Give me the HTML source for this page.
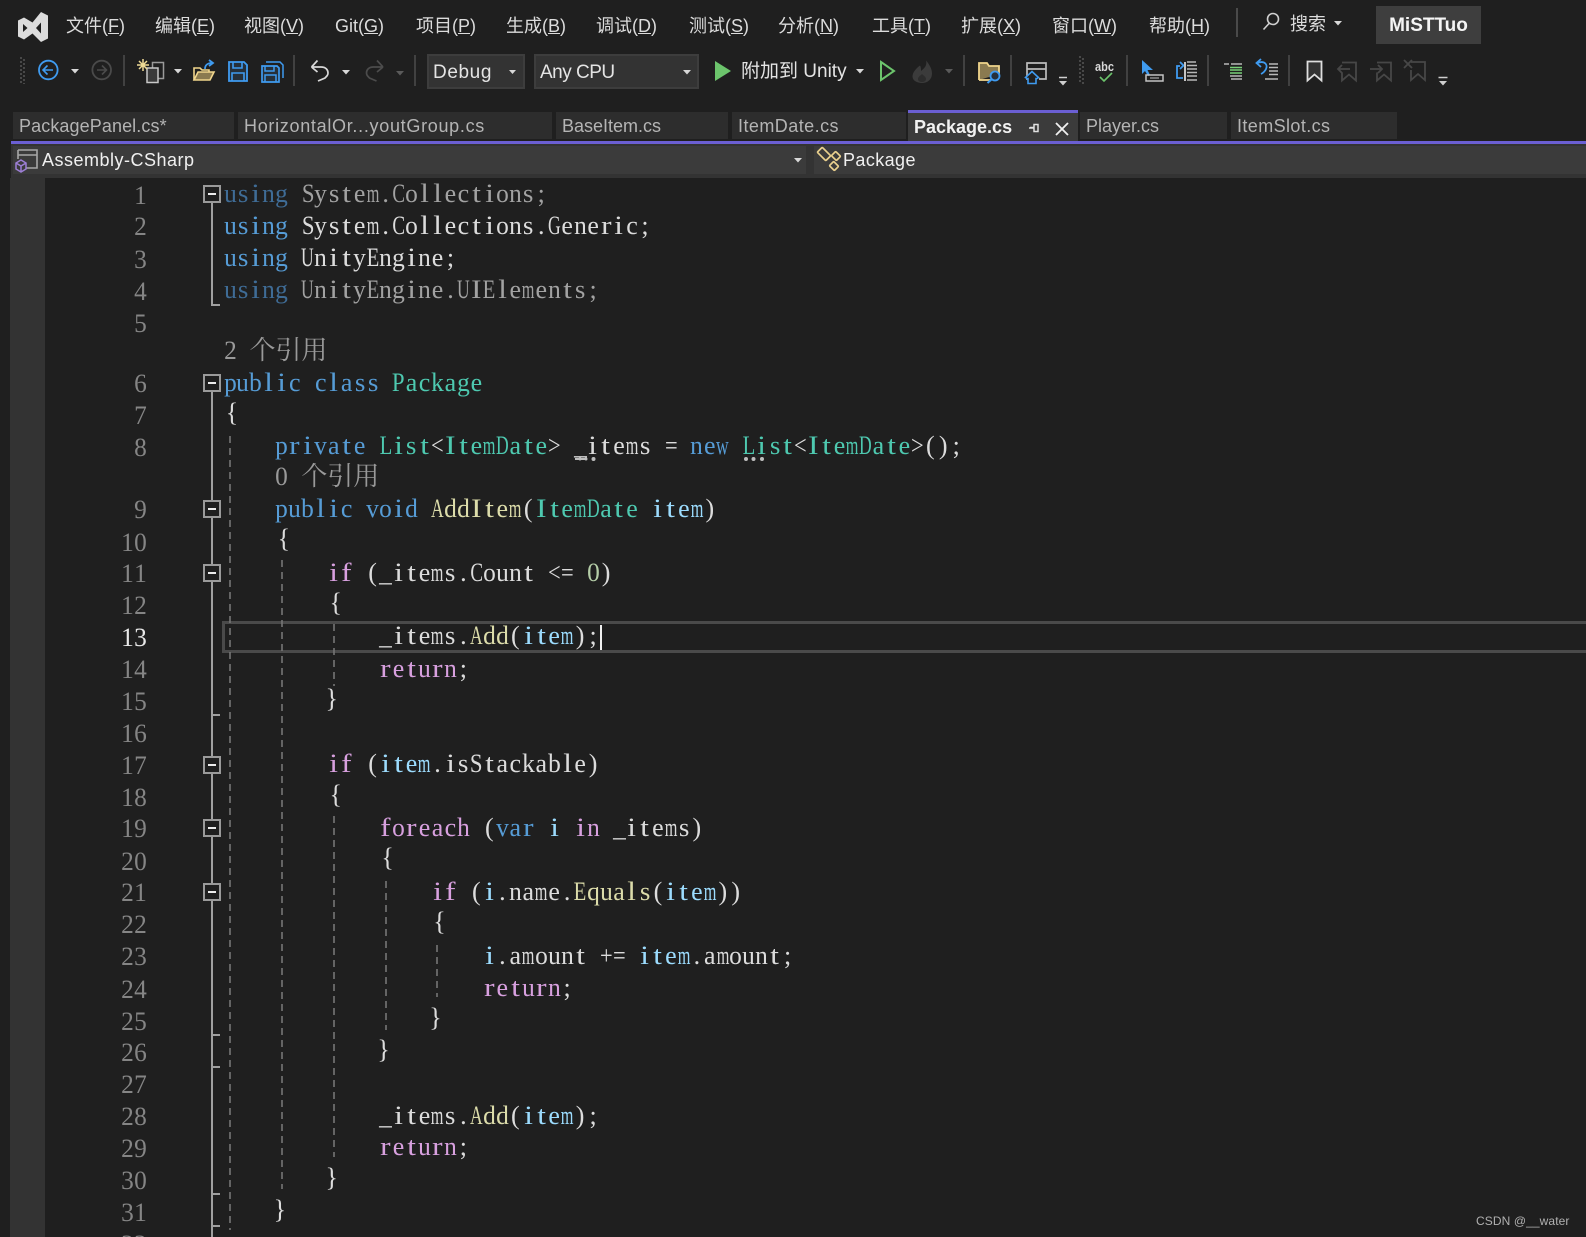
<!DOCTYPE html>
<html lang="zh"><head><meta charset="utf-8"><title>Package.cs</title>
<style>
html,body{margin:0;padding:0;background:#1f1f1f;width:1586px;height:1237px;overflow:hidden}
#r{position:relative;width:1586px;height:1237px;overflow:hidden;background:#1f1f1f;font-family:"Liberation Sans","Noto Sans CJK SC",sans-serif}
.b{position:absolute}
.t{position:absolute;white-space:nowrap;line-height:24px;height:24px}
.m{font-size:18px;color:#dcdcdc;top:14px}
.m u{text-underline-offset:1px}
.tab{font-size:18px;color:#b4b4b4;top:114px}
.tb{font-size:19px;color:#e4e4e4;top:60px}
.c,.n{position:absolute;white-space:pre;height:30px;line-height:30px;font-family:"Liberation Serif","Noto Serif CJK SC",serif;font-size:26px;color:#dcdcdc}
.c{left:223.5px}
.c.o{left:225.5px}
.c.e{left:221.5px}
.n{color:#858585;right:1439px}
.c b,.c em{font-weight:normal;font-style:normal}
.k{color:#569cd6}.kd{color:#3f6c96}.dd{color:#a2a2a2}
.f{color:#d8a0df}.y{color:#4ec9b0}.g{color:#dcdcaa}.p{color:#9cdcfe}.u{color:#b5cea8}.l{color:#a0a0a0}
.ch{display:inline-block;text-align:center;height:30px;vertical-align:top;overflow:visible;white-space:pre}
.ch i{font-style:normal;display:inline-block;transform-origin:50% 50%}
svg{position:absolute;left:0;top:0}
</style></head><body><div id="r">

<!-- backgrounds -->
<div class="b" style="left:10px;top:178px;width:35px;height:1059px;background:#333"></div>
<div class="b" style="left:13px;top:112px;width:221px;height:27px;background:#2d2d2d"></div>
<div class="b" style="left:238px;top:112px;width:314px;height:27px;background:#2d2d2d"></div>
<div class="b" style="left:556px;top:112px;width:172px;height:27px;background:#2d2d2d"></div>
<div class="b" style="left:732px;top:112px;width:174px;height:27px;background:#2d2d2d"></div>
<div class="b" style="left:908px;top:110px;width:170px;height:31px;background:#3b3b3b;border-top:3px solid #6b5fd3;box-sizing:border-box"></div>
<div class="b" style="left:1080px;top:112px;width:147px;height:27px;background:#2d2d2d"></div>
<div class="b" style="left:1231px;top:112px;width:166px;height:27px;background:#2d2d2d"></div>
<div class="b" style="left:11px;top:141px;width:1575px;height:3px;background:#6b5fd3"></div>
<div class="b" style="left:11px;top:144px;width:1575px;height:34px;background:#333"></div>
<div class="b" style="left:13px;top:146px;width:793px;height:28px;background:#3b3b3b"></div>
<div class="b" style="left:814px;top:146px;width:772px;height:28px;background:#3b3b3b"></div>
<div class="b" style="left:427px;top:54px;width:98px;height:35px;background:#333;border:2px solid #3d3d3d;box-sizing:border-box"></div>
<div class="b" style="left:534px;top:54px;width:165px;height:35px;background:#333;border:2px solid #3d3d3d;box-sizing:border-box"></div>
<div class="b" style="left:1376px;top:6px;width:105px;height:38px;background:#3e3e3e"></div>
<div class="b" style="left:222px;top:621px;width:1364px;height:32px;border:3px solid #4a4a4a;border-right:0;box-sizing:border-box"></div>

<!-- menu -->
<div class="t m" style="left:66px">文件(<u>F</u>)</div>
<div class="t m" style="left:155px">编辑(<u>E</u>)</div>
<div class="t m" style="left:244px">视图(<u>V</u>)</div>
<div class="t m" style="left:335px">Git(<u>G</u>)</div>
<div class="t m" style="left:416px">项目(<u>P</u>)</div>
<div class="t m" style="left:506px">生成(<u>B</u>)</div>
<div class="t m" style="left:596px">调试(<u>D</u>)</div>
<div class="t m" style="left:689px">测试(<u>S</u>)</div>
<div class="t m" style="left:778px">分析(<u>N</u>)</div>
<div class="t m" style="left:872px">工具(<u>T</u>)</div>
<div class="t m" style="left:961px">扩展(<u>X</u>)</div>
<div class="t m" style="left:1052px">窗口(<u>W</u>)</div>
<div class="t m" style="left:1149px">帮助(<u>H</u>)</div>
<div class="t m" style="left:1290px;top:12px">搜索</div>
<div class="t" style="left:1376px;width:105px;text-align:center;top:14px;font-size:19px;font-weight:bold;color:#f5f5f5">MiSTTuo</div>

<!-- toolbar text -->
<div class="t tb" style="left:433px;top:61px;letter-spacing:.6px">Debug</div>
<div class="t tb" style="left:540px;top:61px;letter-spacing:-.5px">Any CPU</div>
<div class="t tb" style="left:741px">附加到 Unity</div>

<!-- tabs -->
<div class="t tab" style="left:19px;letter-spacing:.1px">PackagePanel.cs*</div>
<div class="t tab" style="left:244px;letter-spacing:.7px">HorizontalOr...youtGroup.cs</div>
<div class="t tab" style="left:562px">BaseItem.cs</div>
<div class="t tab" style="left:738px;letter-spacing:.45px">ItemDate.cs</div>
<div class="t tab" style="left:914px;top:115px;font-weight:bold;color:#f2f2f2">Package.cs</div>
<div class="t tab" style="left:1086px">Player.cs</div>
<div class="t tab" style="left:1237px;letter-spacing:.4px">ItemSlot.cs</div>
<div class="t" style="left:42px;top:148px;font-size:18px;color:#f0f0f0;letter-spacing:.5px">Assembly-CSharp</div>
<div class="t" style="left:843px;top:148px;font-size:18px;color:#f0f0f0;letter-spacing:.4px">Package</div>

<!-- line numbers -->
<div class="n" style="top:181px">1</div><div class="n" style="top:212px">2</div><div class="n" style="top:245px">3</div><div class="n" style="top:277px">4</div><div class="n" style="top:309px">5</div><div class="n" style="top:369px">6</div><div class="n" style="top:401px">7</div><div class="n" style="top:433px">8</div><div class="n" style="top:495px">9</div><div class="n" style="top:528px">10</div><div class="n" style="top:559px">11</div><div class="n" style="top:591px">12</div><div class="n" style="top:623px;color:#e8e8e8">13</div><div class="n" style="top:655px">14</div><div class="n" style="top:687px">15</div><div class="n" style="top:719px">16</div><div class="n" style="top:751px">17</div><div class="n" style="top:783px">18</div><div class="n" style="top:814px">19</div><div class="n" style="top:847px">20</div><div class="n" style="top:878px">21</div><div class="n" style="top:910px">22</div><div class="n" style="top:942px">23</div><div class="n" style="top:975px">24</div><div class="n" style="top:1007px">25</div><div class="n" style="top:1038px">26</div><div class="n" style="top:1070px">27</div><div class="n" style="top:1102px">28</div><div class="n" style="top:1134px">29</div><div class="n" style="top:1166px">30</div><div class="n" style="top:1198px">31</div><div class="n" style="top:1230px">32</div>

<!-- code -->
<div class="c" style="top:179px"><b class="kd">using</b> <b class="dd">System.Collections;</b></div>
<div class="c" style="top:211px"><b class="k">using</b> System.Collections.Generic;</div>
<div class="c" style="top:243px"><b class="k">using</b> UnityEngine;</div>
<div class="c" style="top:275px"><b class="kd">using</b> <b class="dd">UnityEngine.UIElements;</b></div>
<div class="c l" style="top:336px;color:#999">2 个引用</div>
<div class="c" style="top:368px"><b class="k">public</b> <b class="k">class</b> <b class="y">Package</b></div>
<div class="c o" style="top:398px">{</div>
<div class="c" style="top:431px">    <b class="k">private</b> <b class="y">List</b>&lt;<b class="y">ItemDate</b>&gt; _items = <b class="k">new</b> <b class="y">List</b>&lt;<b class="y">ItemDate</b>&gt;();</div>
<div class="c" style="top:462px;color:#999">    0 个引用</div>
<div class="c" style="top:494px">    <b class="k">public</b> <b class="k">void</b> <b class="g">AddItem</b>(<b class="y">ItemDate</b> <b class="p">item</b>)</div>
<div class="c o" style="top:524px">    {</div>
<div class="c" style="top:558px">        <b class="f">if</b> (_items.Count &lt;= <b class="u">0</b>)</div>
<div class="c o" style="top:588px">        {</div>
<div class="c" style="top:621px">            _items.<b class="g">Add</b>(<b class="p">item</b>);</div>
<div class="c" style="top:654px">            <b class="f">return</b>;</div>
<div class="c e" style="top:684px">        }</div>
<div class="c" style="top:749px">        <b class="f">if</b> (<b class="p">item</b>.isStackable)</div>
<div class="c o" style="top:780px">        {</div>
<div class="c" style="top:813px">            <b class="f">foreach</b> (<b class="k">var</b> <b class="p">i</b> <b class="f">in</b> _items)</div>
<div class="c o" style="top:843px">            {</div>
<div class="c" style="top:877px">                <b class="f">if</b> (<b class="p">i</b>.name.<b class="g">Equals</b>(<b class="p">item</b>))</div>
<div class="c o" style="top:907px">                {</div>
<div class="c" style="top:941px">                    <b class="p">i</b>.amount += <b class="p">item</b>.amount;</div>
<div class="c" style="top:973px">                    <b class="f">return</b>;</div>
<div class="c e" style="top:1003px">                }</div>
<div class="c e" style="top:1035px">            }</div>
<div class="c" style="top:1101px">            _items.<b class="g">Add</b>(<b class="p">item</b>);</div>
<div class="c" style="top:1132px">            <b class="f">return</b>;</div>
<div class="c e" style="top:1163px">        }</div>
<div class="c e" style="top:1195px">    }</div>

<div class="t" style="left:1476px;top:1209px;font-size:12px;color:#b0b0b0;letter-spacing:.1px">CSDN @__water</div>

<svg width="1586" height="1237" viewBox="0 0 1586 1237" fill="none">
<!-- logo -->
<path fill="#dcdcdc" fill-rule="evenodd" d="M18 20.500L24 17.500 32.500 22.500 41 12 48 15.500V38.500L41 42 32.500 33.500 24 39.500 18 36.500ZM23 24V32L27.500 28ZM41 22.500L36 28 41 33.500Z"/>
<!-- separators -->
<g fill="#414141"><rect x="1236" y="8" width="2" height="29" fill="#4a4a4a"/><rect x="123" y="55" width="2" height="31"/><rect x="293" y="55" width="2" height="31"/><rect x="414" y="55" width="2" height="31"/><rect x="963" y="55" width="2" height="31"/><rect x="1010" y="55" width="2" height="31"/><rect x="1126" y="55" width="2" height="31"/><rect x="1207" y="55" width="2" height="31"/><rect x="1288" y="55" width="2" height="31"/></g>
<!-- grips -->
<g stroke="#484848" stroke-width="2" stroke-dasharray="2 2"><path d="M21 57V84M24 59V84M1080 56V84M1083 58V84"/></g>
<!-- small arrows -->
<g fill="#d8d8d8"><path d="M71 69h8l-4 4.500zM174 69h8l-4 4.500zM342 70h8l-4 4.500zM509 70h7l-3.500 4zM683 70h8l-4 4.500zM856 69h8l-4 4.500zM1334 21h8l-4 4.500zM794 158h8l-4 4.500z"/></g>
<g fill="#5a5a5a"><path d="M396 71h8l-4 4.500zM945 69h8l-4 4.500z"/></g>
<!-- back / forward -->
<circle cx="48.300" cy="70" r="9.300" stroke="#3f9bf0" stroke-width="1.800"/><path d="M53 70H43.500M47.500 65.500L43 70l4.500 4.500" stroke="#3f9bf0" stroke-width="1.600"/>
<circle cx="101.700" cy="70" r="9.300" stroke="#4a4a4a" stroke-width="1.800"/><path d="M97 70h9.500M102 65.500l4.500 4.500-4.500 4.500" stroke="#4a4a4a" stroke-width="1.600"/>
<!-- new project -->
<rect x="152.500" y="62.500" width="11" height="16" stroke="#9a9a9a" stroke-width="1.500" fill="#1f1f1f"/><rect x="147" y="68" width="11" height="14.500" stroke="#c8c8c8" stroke-width="1.500" fill="#3a3a3a"/>
<path d="M143 59v12M137 65h12M139 61l8 8M147 61l-8 8" stroke="#f0dc96" stroke-width="1.500"/>
<!-- open folder -->
<path d="M194 80V68h6l2 2h7v3" stroke="#f0d58c" stroke-width="1.600"/><path d="M194 80l4-8h16l-4 8z" fill="#8a7a50" stroke="#f0d58c" stroke-width="1.600"/>
<path d="M205 69c0-4 3-6 7-6M209 60l4 3-4 3" stroke="#3f9bf0" stroke-width="1.800"/>
<!-- save -->
<path d="M229 62h15l3 3v16h-18z" fill="#26303a" stroke="#3f9bf0" stroke-width="1.800"/><path d="M233 62v6h9v-6M232 81v-8h12v8" stroke="#3f9bf0" stroke-width="1.600"/>
<path d="M262 66h15l2 2v14h-17z" fill="#26303a" stroke="#3f9bf0" stroke-width="1.700"/><path d="M265 66v5h9v-5M265 82v-7h11v7M266 62h14l3 3v13" stroke="#3f9bf0" stroke-width="1.500"/>
<!-- undo/redo -->
<path d="M311.500 67H321c5 0 7 3 7 6 0 2-1 3-3 5l-7 3M311.500 67l6-6.500M311.500 67l6 5" stroke="#d8d8d8" stroke-width="1.700"/>
<path d="M383 67h-9.500c-5 0-7 3-7 6 0 2 1 3 3 5l7 3M383 67l-6-6.500M383 67l-6 5" stroke="#4c4c4c" stroke-width="1.700"/>
<!-- play -->
<path d="M715 61l16 10-16 10z" fill="#6cc46c"/>
<path d="M881 62l13 9-13 9z" stroke="#6cc46c" stroke-width="2"/>
<!-- fire -->
<path d="M926 60.500c1.500 5-2 8-5 10.500 0-2 0-4-1-5.500-4 3-7.500 7-7.500 11 0 4 4.500 6.500 9.500 6.500 5.500 0 10-3.500 10-9.500 0-5-3-9.500-6-13z" fill="#3b3b3b"/><path d="M922 74c-2 2-4 3-4 5 0 2 2 3 4 3s4-1 4-3c0-2-2-3-4-5z" fill="#2c2c2c"/>
<!-- folder search -->
<path d="M979 80V63h8l2 3h10v8" stroke="#f0d58c" stroke-width="1.800" fill="#8a7a50"/><path d="M979 80h12" stroke="#f0d58c" stroke-width="1.800"/>
<circle cx="995" cy="76" r="4.500" stroke="#3f9bf0" stroke-width="1.800" fill="#26303a"/><path d="M991.500 79.500l-4 3.500" stroke="#3f9bf0" stroke-width="2"/>
<!-- window home -->
<path d="M1030 79h-3V63h19v16h-7M1027 69h19" stroke="#bdbdbd" stroke-width="1.700"/><path d="M1032 71.500l-6.500 6 1.500 1h1v5h8v-5h1l1.500-1z" fill="#1f1f1f" stroke="#3f9bf0" stroke-width="1.600"/>
<!-- small dropdowns -->
<path d="M1059 77.500h8M1438.500 77.500h9" stroke="#cfcfcf" stroke-width="1.600"/><path d="M1059 81h8l-4 4.500zM1439 81h8l-4 4.500z" fill="#cfcfcf"/>
<!-- abc -->
<text x="1095" y="71" font-family="Liberation Sans" font-size="13" font-weight="bold" fill="#d8d8d8" textLength="19" lengthAdjust="spacingAndGlyphs">abc</text>
<path d="M1100 77l4 4 8-8" stroke="#6cc46c" stroke-width="1.600"/>
<!-- cursor -->
<path d="M1142 60v14l3-3 3 5 2-1-2.500-5H1153z" fill="#3f9bf0"/>
<rect x="1146" y="75" width="17" height="6" stroke="#c4c4c4" stroke-width="1.500"/><path d="M1150 78h9" stroke="#c4c4c4"/>
<!-- bracket doc -->
<path d="M1183 78h-6V66h3M1180 62l3.500 3.500-3.500 3.500" stroke="#3f9bf0" stroke-width="1.800"/>
<path d="M1185 62v19" stroke="#c4c4c4" stroke-width="2"/><path d="M1187 62h9M1187 65.500h10M1187 69h10M1187 72.500h10M1187 76h10M1187 80h10" stroke="#b8b8b8" stroke-width="1.500"/>
<!-- indent -->
<path d="M1224 64h5M1231 64h11M1231 79h11M1230 76h12" stroke="#b8b8b8" stroke-width="1.500"/><path d="M1230 67.500h12M1230 70h12M1230 73h12" stroke="#78d078" stroke-width="1.500"/>
<path d="M1257 63c8-3 11 2 9 6-1 2-3 4-5 5M1261 59l-4.500 4 4.500 4" stroke="#3f9bf0" stroke-width="1.800"/>
<path d="M1269 64h9M1269 67.500h9M1269 71h9M1269 74.500h9M1265 79h13" stroke="#b8b8b8" stroke-width="1.500"/>
<!-- bookmarks -->
<path d="M1307.500 61.500h14v19l-7-6-7 6z" fill="#333" stroke="#dedede" stroke-width="1.800"/>
<g stroke="#474747" stroke-width="1.800"><path d="M1342 62.500h14v18l-7-6-7 6v-8M1338 69h12M1342 65l-4 4 4 4"/><path d="M1377 62.500h14v18l-7-6-7 6v-8M1370 69h12M1378 65l4 4-4 4"/><path d="M1411 62h14v18l-7-6-7 6v-10M1404 60l8 8M1412 60l-8 8"/></g>
<!-- search -->
<circle cx="1273" cy="19" r="5.500" stroke="#d0d0d0" stroke-width="1.600"/><path d="M1269 23.500l-5.500 6" stroke="#d0d0d0" stroke-width="1.600"/>
<!-- pin close -->
<path d="M1030 127.500h4v-3h4v7h-4v-3M1034 124v8M1034 128h-5" stroke="#e0e0e0" stroke-width="1.500"/>
<path d="M1056 123l12 12M1068 123l-12 12" stroke="#f0f0f0" stroke-width="1.800"/>
<!-- nav icons -->
<path d="M18 150h19v18H24M18 150v9M18 155h19" stroke="#a8a8a8" stroke-width="1.600"/>
<path d="M21 160l5 3v6l-5 3-5-3v-6zM16 163l5 3 5-3M21 166v6" stroke="#9d7fd6" stroke-width="1.500" fill="#3b3b3b"/>
<g stroke="#e8cf8d" stroke-width="1.700" fill="#3b3b3b"><rect x="-6" y="-3.500" width="12" height="7" rx="1" transform="translate(824 154) rotate(45)"/><rect x="-3.500" y="-3" width="7" height="6" rx="1" transform="translate(836 156) rotate(45)"/><rect x="-3.500" y="-3" width="7" height="6" rx="1" transform="translate(834 166) rotate(45)"/></g>
<!-- outlining -->
<g stroke="#a0a0a0" stroke-width="2">
<path d="M212 203V305h8"/>
<path d="M212 392V1237M212 715h8M212 1035h8M212 1067h8M212 1194h8M212 1226h8"/>
</g>
<g fill="#1f1f1f" stroke="#9a9a9a" stroke-width="2">
<rect x="204" y="186" width="16" height="16"/><rect x="204" y="375" width="16" height="16"/><rect x="204" y="501" width="16" height="16"/><rect x="204" y="565" width="16" height="16"/><rect x="204" y="757" width="16" height="16"/><rect x="204" y="820" width="16" height="16"/><rect x="204" y="884" width="16" height="16"/>
</g>
<g fill="#ececec"><rect x="208" y="193" width="8" height="2"/><rect x="208" y="382" width="8" height="2"/><rect x="208" y="508" width="8" height="2"/><rect x="208" y="572" width="8" height="2"/><rect x="208" y="764" width="8" height="2"/><rect x="208" y="827" width="8" height="2"/><rect x="208" y="891" width="8" height="2"/></g>
<!-- guides -->
<g stroke="#767676" stroke-width="1.600" stroke-dasharray="7 5">
<path d="M230 436V1230"/><path d="M282 560V1189"/><path d="M334 624V686"/><path d="M334 816V1157"/><path d="M386 881V1030"/><path d="M437 945V997"/>
</g>
<!-- squiggles -->
<g fill="#bdbdbd"><rect x="575" y="458" width="12" height="2"/><circle cx="580" cy="459" r="1.500"/><circle cx="586" cy="459" r="1.500"/><circle cx="593.500" cy="459" r="2"/><circle cx="746" cy="459" r="2"/><circle cx="753.500" cy="459" r="2"/><circle cx="762" cy="459" r="2"/></g>
<!-- caret -->
<rect x="600" y="625" width="2" height="25" fill="#f0f0f0"/>
</svg>
</div>
<script>
(function(){
 var W=12.97;
 document.querySelectorAll('.c,.n').forEach(function(root){
  var w=document.createTreeWalker(root,NodeFilter.SHOW_TEXT),a=[],x;
  while(x=w.nextNode())a.push(x);
  a.forEach(function(t){
   var f=document.createDocumentFragment();
   Array.from(t.nodeValue).forEach(function(ch){
    var s=document.createElement('span');s.className='ch';
    var cjk=ch.charCodeAt(0)>0x2E80;
    s.style.width=(cjk?2*W:W)+'px';
    var i=document.createElement('i');i.textContent=ch;
    s.appendChild(i);f.appendChild(s);
   });
   t.parentNode.replaceChild(f,t);
  });
 });
 document.querySelectorAll('.ch i').forEach(function(i){
  var cw=parseFloat(i.parentNode.style.width),ww=i.getBoundingClientRect().width,ch=i.textContent;
  if(cw>20||ch===' ')return;
  var sc=1;
  if(ww>cw-0.3)sc=(cw-0.3)/ww;
  else if(/[a-zA-Z]/.test(ch)&&ww<10.5)sc=Math.min(1.2,10.5/ww);
  if(sc!==1){
   i.style.transform='scaleX('+sc+')';
   if(ww>cw){i.style.marginLeft=((cw-ww)/2)+'px';i.style.marginRight=((cw-ww)/2)+'px';}
  }
 });
})();
</script>
</body></html>
